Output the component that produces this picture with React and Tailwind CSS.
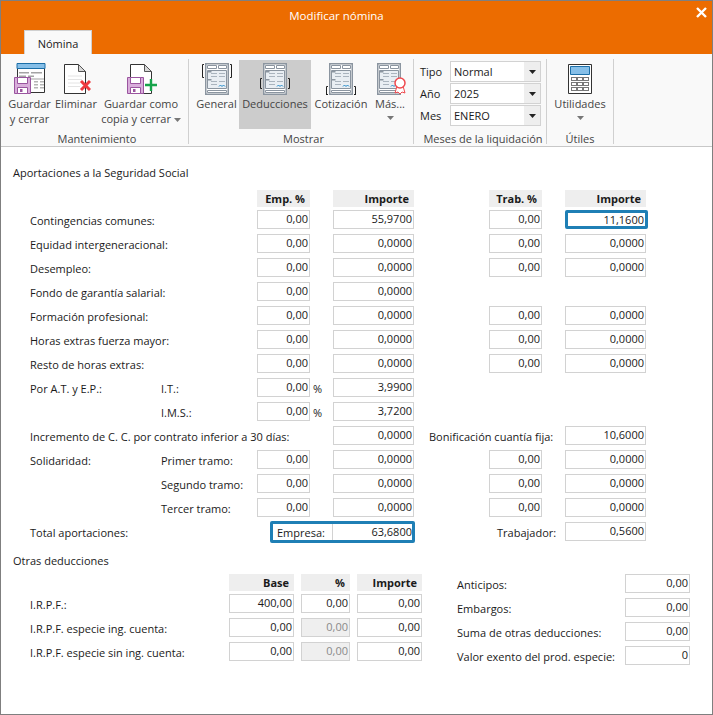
import React from "react";

const FONT = "font-['Open_Sans','Noto_Sans',sans-serif]";

function Caret({ className = "" }) {
  return <svg width="7" height="4" viewBox="0 0 7 4" className={className}><path d="M0 0h7L3.5 4z" fill="currentColor" /></svg>;
}

function Floppy({ x = 0, y = 0 }) {
  return (
    <g transform={`translate(${x} ${y})`}>
      <path d="M.5.5h16v16H.5z" fill="#d9aedb" stroke="#9a559f" />
      <path d="M3.500.5h10v6h-10z" fill="#fff" stroke="#9a559f" />
      <path d="M3.500 10.500h10v6h-10z" fill="#fff" stroke="#9a559f" />
      <path d="M6 12h2.500v3H6z" fill="#9a559f" />
    </g>
  );
}

function GuardarIcon() {
  return (
    <svg width="32" height="32" viewBox="0 0 32 32">
      <path d="M3.500 5.500h27v24h-27z" fill="#fff" stroke="#333" />
      <path d="M3 .5h28v5H3z" fill="#86bfe8" stroke="#1c6fa8" />
      <path d="M5 9h10v1.500H5zM17 9h11v1.500H17zM5 12.500h7v1.500H5zM14 12.500h6v1.500h-6zM4 15.500h26v1H4z" fill="#a4a4a4" />
      <path d="M20 18h4v1.500h-4zM26 18h4v1.500h-4zM20 21h4v1.500h-4zM26 21h4v1.500h-4zM20 24h4v1.500h-4zM26 24h4v1.500h-4z" fill="#b5b5b5" />
      <Floppy x={0} y={14} />
    </svg>
  );
}

function DocBase({ dx = 0 }) {
  return (
    <g transform={`translate(${dx} 1)`}>
      <path d="M.5.5h14l7 7v22H.5z" fill="#fff" stroke="#333" />
      <path d="M14.500.5v7h7z" fill="#d8d8d8" stroke="#555" />
    </g>
  );
}

function EliminarIcon() {
  return (
    <svg width="30" height="31" viewBox="0 0 30 31">
      <DocBase dx={3} />
      <path d="M7 13h14M7 16.500h14M7 20h12M7 23.500h12" stroke="#e4e4e4" />
      <path d="M20 18l9 9M29 18l-9 9" stroke="#ef3b3f" strokeWidth="3" />
    </svg>
  );
}

function GuardarComoIcon() {
  return (
    <svg width="32" height="31" viewBox="0 0 32 31">
      <DocBase dx={5} />
      <Floppy x={2} y={14} />
      <path d="M26 16v12M20 22h12" stroke="#16a34a" strokeWidth="2.400" />
    </svg>
  );
}

function Sheet({ bracket, extra, width = 32 }) {
  return (
    <svg width={width} height="32" viewBox={`0 0 ${width} 32`}>
      <path d="M4.750.75h22.500v30.500H4.750z" fill="#fff" stroke="#8b95a0" strokeWidth="1.500" />
      <path d="M6.500 2.500h9v3h-9zM17.500 2.500h8v3h-8z" fill="#fff" stroke="#8b95a0" />
      <path d="M6.500 7.500h19v18h-19z" fill="#e9eef3" stroke="#8b95a0" />
      <path d="M10 10.500h6M18 10.500h6M10 13.500h6M18 13.500h6M10 18.500h6M18 18.500h6M10 21.500h6" stroke="#aab4be" />
      <path d="M7 8h3.500v1.500H7zM7 16h3.500v1.500H7z" fill="#8b95a0" />
      <path d="M18 23.500l1.500-1.500 1.500 1.500 1.500-1.500 1.500 1.500" stroke="#1b87c9" fill="none" />
      <path d="M6.500 27.500h19v2h-19z" fill="#fff" stroke="#8b95a0" />
      {bracket === "top" && <path d="M3 1.500H1.500v13H3M29 1.500h1.500v13H29" stroke="#222" fill="none" />}
      {bracket === "mid" && <path d="M3 15.500H1.500v10H3M29 15.500h1.500v10H29" stroke="#222" fill="none" />}
      {bracket === "low" && <path d="M3 23.500H1.500v8.500M29 23.500h1.500v8.500M1.500 31.500H3M30.500 31.500H29" stroke="#222" fill="none" />}
      {extra}
    </svg>
  );
}

function Rosette() {
  return (
    <g>
      <path d="M24 23l-2 7 3-1 2 2 2-2 3 1-2-7z" fill="#fff" stroke="#ef4a4f" />
      <circle cx="27" cy="20" r="5" fill="#fff" stroke="#ef4a4f" strokeWidth="1.500" />
    </g>
  );
}

function Calculator() {
  return (
    <svg width="24" height="31" viewBox="0 0 24 31" className="mt-[1px]">
      <path d="M.5.5h23v29h-23z" fill="#fff" stroke="#333" />
      <path d="M2.500 2.500h19v8h-19z" fill="#86bfe8" stroke="#1c6fa8" />
      {[13.5, 18.5, 23.5].map((y) =>
        [3.5, 9.5, 15.5].map((x) => (
          <rect key={`${x}-${y}`} x={x} y={y} width="5" height="3" fill="#fff" stroke="#777" />
        ))
      )}
    </svg>
  );
}

function RibbonBtn({ icon, lines, caret, active, w }) {
  return (
    <div className={`flex flex-col items-center pt-[3px] mt-[1px] h-[69px] ${active ? "bg-[#cccccc]" : ""} ${w}`}>
      <div className="flex items-start justify-center h-[33px]">{icon}</div>
      {lines.map((l, i) => (
        <div key={i} className="leading-[15px] text-[#444] whitespace-nowrap">{l}</div>
      ))}
      {caret && <Caret className="mt-[5px] text-[#777]" />}
    </div>
  );
}

function Group({ label, children, w, pl = "" }) {
  return (
    <div className={`flex flex-col h-[85px] border-r border-[#d0d0d0] ${w} ${pl}`}>
      <div className="flex flex-1 min-h-0 items-start">{children}</div>
      <div className="text-center leading-[15px] text-[#444] h-[13px] whitespace-nowrap">{label}</div>
    </div>
  );
}

function SelectField({ label, value }) {
  return (
    <div className="flex items-start h-[22px]">
      <span className="w-[30px] text-[#1a1a1a] leading-[21px]">{label}</span>
      <div className="flex w-[91px] h-[21px] border border-[#d2d2d2] bg-white">
        <span className="flex-1 pl-[3px] leading-[19px] text-[#1a1a1a]">{value}</span>
        <span className="w-[16px] bg-[#eeeeee] flex items-center justify-center"><Caret className="text-[#222]" /></span>
      </div>
    </div>
  );
}

function Head({ children, className = "" }) {
  return <div className={`h-[17px] bg-[#eeeeee] text-right pr-[5px] leading-[17px] font-bold text-[#1a1a1a] ${className}`}>{children}</div>;
}

function Field({ value, focus, disabled, className = "" }) {
  const border = focus
    ? "border-[3px] border-[#1f7fb5] rounded-[2px] pr-[1px] leading-[13px] w-[83px]"
    : "border border-[#d2d2d2] pr-[1px] leading-[15px]";
  return (
    <div className={`h-[19px] text-right ${border} ${disabled ? "bg-[#efefef] text-[#8a8a8a]" : "bg-white text-[#1a1a1a]"} ${className}`}>{value}</div>
  );
}

const Label = ({ children, className = "" }) => (
  <div className={`text-[#1a1a1a] whitespace-nowrap leading-[19px] pt-[1px] ${className}`}>{children}</div>
);

const Pct = () => <span className="pl-[3px] leading-[19px] pt-[1px] text-[#1a1a1a]">%</span>;

const GRID = "grid grid-cols-[130px_97px_53px_23px_81px_75px_53px_23px_81px] h-[19px] mb-[5px]";

function Row({ label, sub, emp, imp, trab = "0,00", imp2 = "0,0000", pct, focus }) {
  return (
    <div className={GRID}>
      <Label>{label}</Label>
      <Label className="pl-[1px]">{sub}</Label>
      <Field value={emp} />
      {pct ? <Pct /> : <span />}
      <Field value={imp} />
      <span />
      {trab !== null ? <Field value={trab} /> : <span />}
      <span />
      {imp2 !== null ? <Field value={imp2} focus={focus} /> : <span />}
    </div>
  );
}

export default function App() {
  return (
    <div className={`w-[713px] h-[715px] overflow-hidden bg-white border border-[#7f7f7f] text-[11px] flex flex-col ${FONT}`}>
      <div className="relative h-[53px] bg-[#ec6c00] shrink-0">
        <div className="text-center text-white text-[11.5px] leading-[16px] pt-[7px] pr-[40px]">Modificar nómina</div>
        <svg width="11" height="11" viewBox="0 0 11 11" className="absolute right-[5px] top-[6px]">
          <path d="M1 1l9 9M10 1l-9 9" stroke="#fff" strokeWidth="2.400" />
        </svg>
        <div className="absolute left-[23px] bottom-0 w-[68px] h-[24px] bg-[#f9f9f9] border border-b-0 border-[#d0d0d0] text-center leading-[25px] text-[#1a1a1a]">Nómina</div>
      </div>

      <div className="h-[93px] shrink-0 bg-[#f9f9f9] border-b border-[#c8c8c8] flex pt-[5px] pl-[5px]">
        <Group label="Mantenimiento" w="w-[183px]">
          <RibbonBtn w="w-[47px]" icon={<GuardarIcon />} lines={["Guardar", "y cerrar"]} />
          <RibbonBtn w="w-[46px]" icon={<EliminarIcon />} lines={["Eliminar"]} />
          <RibbonBtn w="w-[84px]" icon={<GuardarComoIcon />} lines={["Guardar como", <span key="c">copia y cerrar <Caret className="inline-block align-middle text-[#777]" /></span>]} />
        </Group>
        <Group label="Mostrar" w="w-[225px]" pl="pl-[5px]">
          <RibbonBtn w="w-[45px]" icon={<Sheet bracket="top" />} lines={["General"]} />
          <RibbonBtn w="w-[72px]" active icon={<Sheet bracket="mid" />} lines={["Deducciones"]} />
          <RibbonBtn w="w-[60px]" icon={<Sheet bracket="low" />} lines={["Cotización"]} />
          <RibbonBtn w="w-[38px]" icon={<Sheet width={34} extra={<Rosette />} />} lines={["Más..."]} caret />
        </Group>
        <Group label="Meses de la liquidación" w="w-[133px]" pl="pl-[6px]">
          <div className="flex flex-col pt-[2px]">
            <SelectField label="Tipo" value="Normal" />
            <SelectField label="Año" value="2025" />
            <SelectField label="Mes" value="ENERO" />
          </div>
        </Group>
        <Group label="Útiles" w="w-[67px]">
          <RibbonBtn w="w-[66px]" icon={<Calculator />} lines={["Utilidades"]} caret />
        </Group>
      </div>

      <div className="flex-1 bg-white">
        <div className="pl-[12px] pt-[18px] leading-[16px] text-[#1a1a1a]">Aportaciones a la Seguridad Social</div>
        <div className="pl-[29px] pt-[9px]">
          <div className="grid grid-cols-[130px_97px_53px_23px_81px_75px_53px_23px_81px] h-[17px] mb-[3px]">
            <span /><span />
            <Head>Emp. %</Head><span />
            <Head>Importe</Head><span />
            <Head>Trab. %</Head><span />
            <Head>Importe</Head>
          </div>
          <Row label="Contingencias comunes:" emp="0,00" imp="55,9700" imp2="11,1600" focus />
          <Row label="Equidad intergeneracional:" emp="0,00" imp="0,0000" />
          <Row label="Desempleo:" emp="0,00" imp="0,0000" />
          <Row label="Fondo de garantía salarial:" emp="0,00" imp="0,0000" trab={null} imp2={null} />
          <Row label="Formación profesional:" emp="0,00" imp="0,0000" />
          <Row label="Horas extras fuerza mayor:" emp="0,00" imp="0,0000" />
          <Row label="Resto de horas extras:" emp="0,00" imp="0,0000" />
          <Row label="Por A.T. y E.P.:" sub="I.T.:" emp="0,00" imp="3,9900" pct trab={null} imp2={null} />
          <Row sub="I.M.S.:" emp="0,00" imp="3,7200" pct trab={null} imp2={null} />
          <div className={GRID}>
            <Label className="col-span-4">Incremento de C. C. por contrato inferior a 30 días:</Label>
            <Field value="0,0000" />
            <Label className="col-span-3 pl-[15px]">Bonificación cuantía fija:</Label>
            <Field value="10,6000" />
          </div>
          <Row label="Solidaridad:" sub="Primer tramo:" emp="0,00" imp="0,0000" />
          <Row sub="Segundo tramo:" emp="0,00" imp="0,0000" />
          <Row sub="Tercer tramo:" emp="0,00" imp="0,0000" />
          <div className={GRID}>
            <Label>Total aportaciones:</Label>
            <div className="col-start-2 col-span-4 ml-[110px] -mt-[1px] flex h-[22px] border-[3px] border-[#1f7fb5] rounded-[2px] bg-white w-[145px]">
              <span className="w-[60px] pl-[4px] leading-[16px] pt-[1px] border-r border-[#d2d2d2] text-[#1a1a1a]">Empresa:</span>
              <span className="flex-1 text-right leading-[15px] text-[#1a1a1a]">63,6800</span>
            </div>
            <Label className="col-start-6 col-span-3 pl-[83px]">Trabajador:</Label>
            <Field value="0,5600" className="col-start-9" />
          </div>
        </div>

        <div className="pl-[12px] pt-[7px] leading-[16px] text-[#1a1a1a]">Otras deducciones</div>
        <div className="flex pl-[29px]">
          <div className="w-[427px]">
            <div className="grid grid-cols-[199px_65px_7px_49px_7px_65px] h-[17px] mt-[5px] mb-[3px]">
              <span />
              <Head>Base</Head><span />
              <Head>%</Head><span />
              <Head>Importe</Head>
            </div>
            {[
              ["I.R.P.F.:", "400,00", false],
              ["I.R.P.F. especie ing. cuenta:", "0,00", true],
              ["I.R.P.F. especie sin ing. cuenta:", "0,00", true],
            ].map(([l, v, d]) => (
              <div key={l} className="grid grid-cols-[199px_65px_7px_49px_7px_65px] h-[19px] mb-[5px]">
                <Label>{l}</Label>
                <Field value={v} /><span />
                <Field value="0,00" disabled={d} /><span />
                <Field value="0,00" />
              </div>
            ))}
          </div>
          <div className="flex flex-col pt-[5px]">
            {[
              ["Anticipos:", "0,00"],
              ["Embargos:", "0,00"],
              ["Suma de otras deducciones:", "0,00"],
              ["Valor exento del prod. especie:", "0"],
            ].map(([l, v]) => (
              <div key={l} className="grid grid-cols-[168px_65px] h-[19px] mb-[5px]">
                <Label>{l}</Label>
                <Field value={v} />
              </div>
            ))}
          </div>
        </div>
      </div>
    </div>
  );
}
